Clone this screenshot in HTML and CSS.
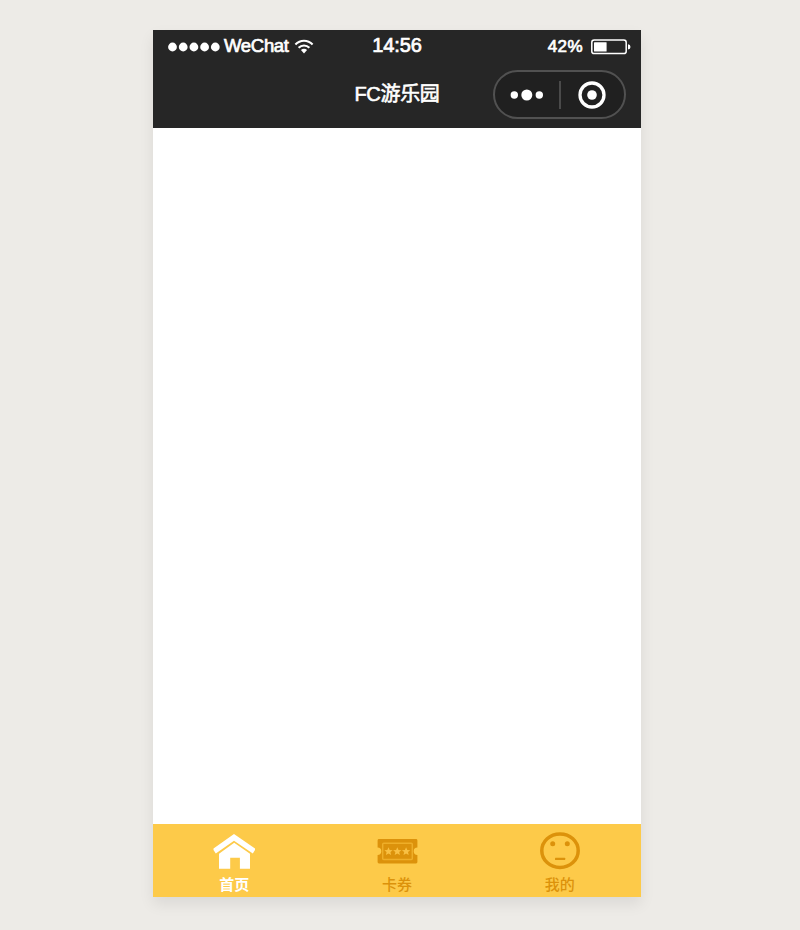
FILE: index.html
```html
<!DOCTYPE html>
<html lang="zh-CN">
<head>
<meta charset="utf-8">
<title>FC游乐园</title>
<link rel="stylesheet" href="styles.css">
</head>
<body>
<div class="phone">
  <header class="header">
    <div class="status">
      <div class="carrier">
        <svg class="signal" width="52" height="10" viewBox="0 0 52 10"><g fill="#fff"><circle cx="4.5" cy="5" r="4.4"/><circle cx="15.2" cy="5" r="4.4"/><circle cx="25.9" cy="5" r="4.4"/><circle cx="36.6" cy="5" r="4.4"/><circle cx="47.3" cy="5" r="4.4"/></g></svg>
        <span class="network">WeChat</span>
        <svg class="wifi" width="20" height="15" viewBox="0 0 20 15"><g fill="none" stroke="#fff" stroke-width="2"><path d="M1.4 5.5C6.2.4 13.8.4 18.6 5.5"/><path d="M4.6 8.8C7.6 5.6 12.4 5.6 15.4 8.8"/></g><path d="M6.9 11.1Q10 8.5 13.1 11.1L10 14.4Z" fill="#fff"/></svg>
      </div>
      <span class="time">14:56</span>
      <div class="power">
        <span class="percent">42%</span>
        <svg width="40" height="16" viewBox="0 0 40 16"><rect x=".8" y="1" width="34.4" height="13.6" rx="2.4" fill="none" stroke="#fff" stroke-width="1.5"/><rect x="3" y="3.2" width="12.6" height="9.3" rx=".5" fill="#fff"/><path d="M37 5.2Q39.5 5.5 39.5 7.9T37 10.6Z" fill="#fff"/></svg>
      </div>
    </div>
    <div class="nav">
      <h1 class="title">FC游乐园</h1>
      <div class="capsule">
        <svg class="more" width="34" height="12" viewBox="0 0 34 12"><g fill="#fff"><circle cx="4.3" cy="6" r="3.7"/><circle cx="16.8" cy="6" r="5.5"/><circle cx="29.3" cy="6" r="3.7"/></g></svg>
        <span class="divider"></span>
        <svg class="close" width="28" height="28" viewBox="0 0 28 28"><circle cx="14" cy="14" r="12" fill="none" stroke="#fff" stroke-width="3.3"/><circle cx="14" cy="14" r="4.8" fill="#fff"/></svg>
      </div>
    </div>
  </header>
  <main class="page"></main>
  <nav class="tabbar">
    <div class="tab active">
      <svg class="icon" width="44" height="40" viewBox="0 0 44 40"><g fill="currentColor"><path d="M22 2 43 16.6V18L40.8 21.5 22 8.8 3.8 21.5 1.5 18V16.6Z"/><path d="M22.2 10.8 38 21.8V36.8H27.9V25.8H18.2V36.8H7V21.8Z"/></g></svg>
      <span class="label">首页</span>
    </div>
    <div class="tab">
      <svg class="icon" width="44" height="40" viewBox="0 0 44 40"><path d="M4 7H41Q42.4 7 42.4 8.4V15.5A3.7 3.7 0 0 0 42.4 22.9V30.1Q42.4 31.5 41 31.5H4Q2.6 31.5 2.6 30.1V22.9A3.7 3.7 0 0 0 2.6 15.5V8.4Q2.6 7 4 7Z" fill="currentColor"/><rect x="7.7" y="11.2" width="29.6" height="16.4" rx="1" fill="none" stroke="#eeae28" stroke-width="1.5"/><g fill="#f8c044"><path id="star" d="M13.5 15.2 14.7 18 17.7 18.2 15.4 20.1 16.1 23 13.5 21.5 10.9 23 11.6 20.1 9.3 18.2 12.3 18Z"/><use href="#star" x="8.8"/><use href="#star" x="17.6"/></g></svg>
      <span class="label">卡券</span>
    </div>
    <div class="tab">
      <svg class="icon" width="44" height="40" viewBox="0 0 44 40"><ellipse cx="22" cy="18.7" rx="18.2" ry="16.8" fill="none" stroke="currentColor" stroke-width="3.5"/><g fill="currentColor"><circle cx="14.7" cy="11.7" r="2.5"/><circle cx="29.3" cy="11.7" r="2.5"/><rect x="17" y="25.7" width="10.2" height="2.4" rx=".5"/></g></svg>
      <span class="label">我的</span>
    </div>
  </nav>
</div>
</body>
</html>
```
FILE: styles.css
```css
* { box-sizing: border-box; }
body {
  margin: 0;
  height: 930px;
  padding-top: 30px;
  padding-left: 153px;
  background: #edebe7;
  font-family: "Liberation Sans", "Noto Sans CJK SC", sans-serif;
  overflow: hidden;
}
.phone {
  display: flex;
  flex-direction: column;
  width: 488px;
  height: 867px;
  background: #fff;
  box-shadow: 0 7px 14px rgba(0, 0, 0, .08);
}
.header {
  height: 98px;
  background: #262626;
  color: #fff;
}
.status {
  display: grid;
  grid-template-columns: 1fr auto 1fr;
  align-items: center;
  height: 32px;
  padding: 0 10px 0 15px;
}
.carrier, .power { display: flex; align-items: center; }
.signal { margin-top: 2px; }
.network {
  width: 66px;
  margin-left: 4px;
  font-size: 18.5px;
  letter-spacing: -.3px;
  -webkit-text-stroke: .7px;
}
.wifi { margin-left: 4px; margin-top: 1px; }
.time {
  margin-right: 5px;
  font-size: 20px;
  letter-spacing: -.1px;
  line-height: 30px;
  padding-bottom: 2px;
  -webkit-text-stroke: .7px;
}
.power { justify-content: flex-end; gap: 8px; padding-top: 1px; }
.percent { font-size: 17px; letter-spacing: .4px; -webkit-text-stroke: .7px; }
.nav {
  display: grid;
  grid-template-columns: 1fr auto 1fr;
  align-items: center;
  height: 65px;
  padding: 0 15px;
}
.title {
  grid-column: 2;
  margin: 0;
  font-size: 20px;
  font-weight: 400;
  line-height: 30px;
  letter-spacing: -.3px;
  padding-bottom: 2px;
  -webkit-text-stroke: .6px;
}
.capsule {
  display: grid;
  grid-template-columns: 1fr 2px 1fr;
  align-items: center;
  justify-items: center;
  justify-self: end;
  width: 133px;
  height: 49px;
  border: 2px solid #515151;
  border-radius: 25px;
  background: #202020;
}
.divider { width: 2px; height: 28px; background: #4a4a4a; }
.page { flex: 1; }
.tabbar {
  display: grid;
  grid-template-columns: repeat(3, 1fr);
  height: 73px;
  background: #fdca49;
}
.tab {
  display: flex;
  flex-direction: column;
  align-items: center;
  padding-top: 8px;
  color: #dc920b;
}
.tab.active { color: #fff; }
.icon { display: block; }
.label {
  margin-top: 1px;
  font-size: 15px;
  font-weight: 500;
  line-height: 24px;
}
.active .label { font-weight: 700; }
```
